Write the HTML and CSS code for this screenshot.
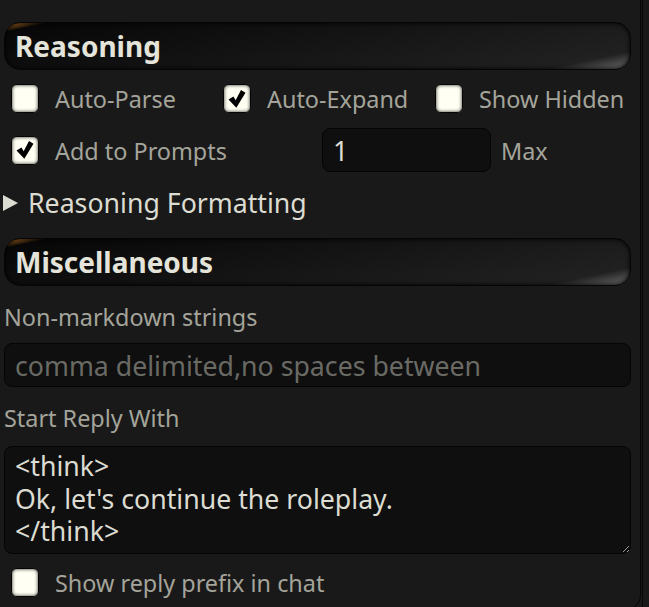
FILE: index.html
```html
<!DOCTYPE html>
<html lang="en">
<head>
    <meta charset="UTF-8">
    <meta name="viewport" content="width=device-width, initial-scale=1.0">
    <title>Advanced Formatting</title>
    <link rel="stylesheet" href="styles.css">
</head>
<body>
    <div class="shell">
        <div class="panel">
            <h4 class="standout-header">Reasoning</h4>

            <div class="check-grid">
                <label class="opt">
                    <span class="box"></span>
                    <span class="opt-text">Auto-Parse</span>
                </label>
                <label class="opt">
                    <span class="box checked">
                        <svg viewBox="0 0 24 24"><path d="M1.8 12.6 L7.8 9 L10.4 13.4 L16.8 1.2 L22.2 4.4 L11.2 22.4 Z"/></svg>
                    </span>
                    <span class="opt-text">Auto-Expand</span>
                </label>
                <label class="opt">
                    <span class="box"></span>
                    <span class="opt-text">Show Hidden</span>
                </label>
            </div>

            <div class="prompt-row">
                <label class="opt opt-wide">
                    <span class="box checked">
                        <svg viewBox="0 0 24 24"><path d="M1.8 12.6 L7.8 9 L10.4 13.4 L16.8 1.2 L22.2 4.4 L11.2 22.4 Z"/></svg>
                    </span>
                    <span class="opt-text">Add to Prompts</span>
                </label>
                <input class="text-input max-input" type="number" value="1">
                <span class="opt-text max-label">Max</span>
            </div>

            <details class="drawer">
                <summary><span class="arrow"></span>Reasoning Formatting</summary>
            </details>

            <h4 class="standout-header">Miscellaneous</h4>

            <label class="field-label" for="nonmd">Non-markdown strings</label>
            <input class="text-input wide-input" id="nonmd" type="text" placeholder="comma delimited,no spaces between">

            <label class="field-label" for="reply-start">Start Reply With</label>
            <textarea class="text-input reply-area" id="reply-start">&lt;think&gt;
Ok, let's continue the roleplay.
&lt;/think&gt;</textarea>

            <label class="opt opt-last">
                <span class="box"></span>
                <span class="opt-text">Show reply prefix in chat</span>
            </label>
        </div>
    </div>
</body>
</html>
```

FILE: styles.css
```css
html, body { margin: 0; height: 100%; overflow: hidden; }
body { font-family: "Noto Sans", sans-serif; font-size: 26.7px; color: rgb(220, 220, 210); background-color: #191919; color-scheme: dark; }

.shell { width: 643px; height: 610px; border-right: 1px solid #060606; box-sizing: border-box; }
.panel { width: 641px; height: 610px; box-sizing: border-box; padding: 22px 9px 0 4px; border-right: 1px solid #060606; border-bottom: 1px solid #060606; border-bottom-right-radius: 15px; }

/* section headers */
.standout-header { margin: 0; height: 48px; box-sizing: border-box; padding: 1px 10px 0; font-size: 28px; font-weight: 700; line-height: 45px; color: rgb(228, 228, 218); border: 1px solid #050505; border-radius: 16px; background-image: linear-gradient(348deg, rgba(255, 255, 255, 0.3) 2%, rgba(50, 50, 50, 0.3) 10%, rgba(0, 0, 0, 0.7) 95%, rgb(225, 138, 36) 100%); box-shadow: inset 0 0 5px #000; }

/* checkboxes */
.opt { display: flex; align-items: center; }
.box { flex: none; width: 28px; height: 29px; box-sizing: border-box; border: 1px solid #050505; border-radius: 6px; background-color: #fffff4; box-shadow: inset 0 0 3px 1px rgba(0, 0, 0, 0.5); display: flex; align-items: center; justify-content: center; }
.box svg { width: 20px; height: 22px; fill: #000; }
.opt-text { margin-left: 16px; font-size: 23.4px; line-height: 31px; color: #a4a49b; padding-top: 2px; }

.check-grid { display: grid; grid-template-columns: repeat(3, 212px); margin: 12px 0 0 7px; height: 29px; }

.prompt-row { display: flex; align-items: center; margin: 17px 0 0 7px; height: 44px; }
.opt-wide { width: 311px; }
.max-label { margin-left: 10px; }

/* inputs */
.text-input { box-sizing: border-box; font-family: "Noto Sans", sans-serif; font-size: 26.7px; color: rgb(220, 220, 210); background-color: #0f0f0f; border: 1px solid #050505; border-radius: 8px; outline: none; }
.max-input { width: 169px; height: 44px; padding: 0 10px; }
.wide-input { display: block; width: 100%; height: 44px; margin-top: 10px; padding: 0 10px; }
.wide-input::placeholder { color: #6a6a65; }
.reply-area { display: block; width: 100%; height: 108px; margin-top: 12px; padding: 3px 10px; line-height: 32.5px; resize: vertical; overflow: hidden; }

.field-label { display: block; margin-top: 16px; font-size: 23.4px; line-height: 31px; color: #a4a49b; }

/* drawer */
.drawer { margin: 13px 0 18px -4px; }
.drawer summary { list-style: none; display: flex; align-items: center; line-height: 35px; cursor: pointer; }
.drawer summary::-webkit-details-marker { display: none; }
.arrow { width: 0; height: 0; margin: 1px 10px 0 3px; border-left: 15px solid rgb(220, 220, 210); border-top: 8.5px solid transparent; border-bottom: 8.5px solid transparent; }

.opt-last { margin: 14px 0 0 7px; height: 29px; }
```
